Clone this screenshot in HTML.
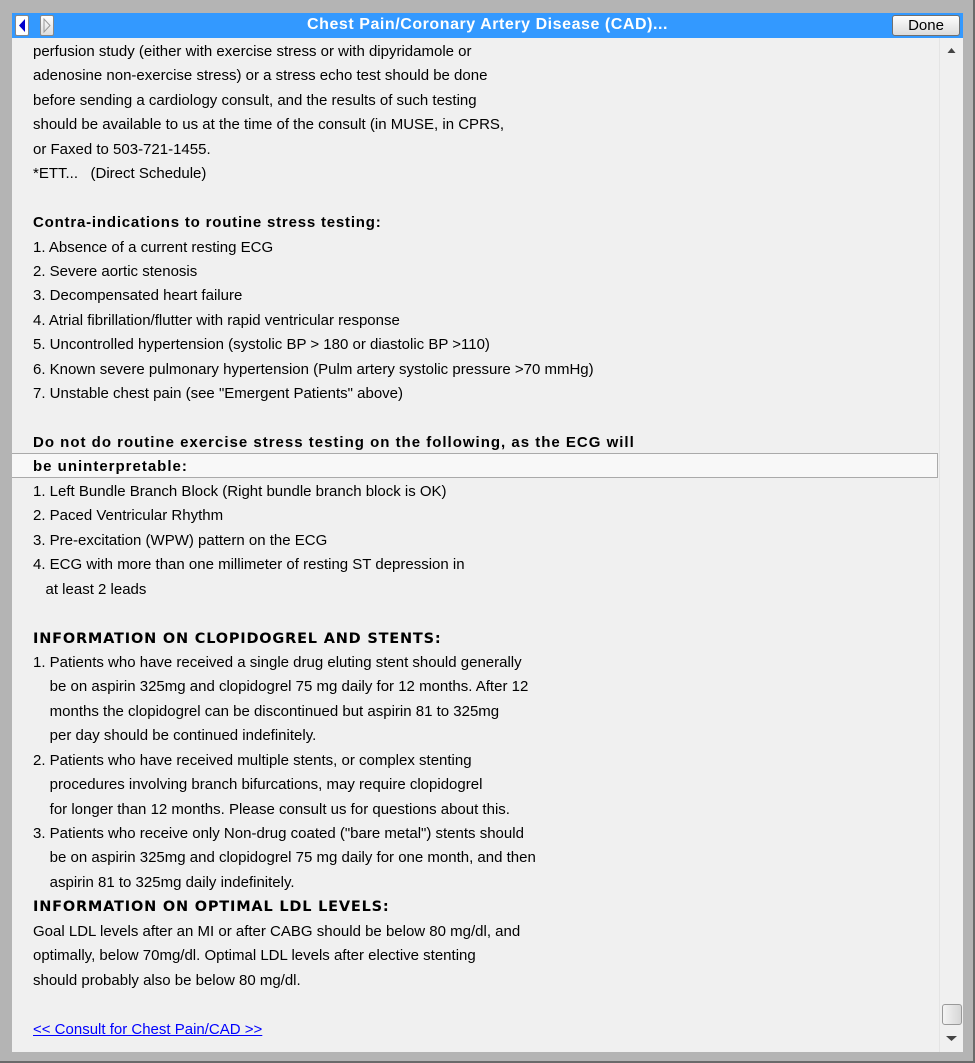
<!DOCTYPE html>
<html><head><style>
html,body{margin:0;padding:0;}
body{width:975px;height:1063px;background:#b4b4b4;position:relative;overflow:hidden;font-family:"Liberation Sans",sans-serif;}
#frame{position:absolute;left:0;top:0;width:973px;height:1061px;border-right:2px solid #6a6a6a;border-bottom:2px solid #6a6a6a;}
#title{position:absolute;left:12px;top:13px;width:951px;height:25px;background:#3399ff;}
#title .t{position:absolute;left:0;right:0;top:3px;text-align:center;color:#fff;font-weight:bold;font-size:16px;letter-spacing:0.55px;}
.nb{position:absolute;top:2px;width:12px;height:19px;background:linear-gradient(#fff,#ddd);border:1px solid #888;border-radius:2px;}
#done{position:absolute;right:3px;top:2px;width:66px;height:19px;background:linear-gradient(#fdfdfd,#dcdcdc);border:1px solid #707070;border-radius:3px;font-size:15px;text-align:center;line-height:19px;color:#000;}
#content{position:absolute;left:12px;top:38px;width:951px;height:1014px;background:#f0f0f0;}
#sb{position:absolute;right:0;top:0;width:23px;height:100%;background:#f0f0f0;border-left:1px solid #e4e4e4;}
#thumb{position:absolute;left:2px;top:966px;width:18px;height:19px;border:1px solid #999;border-radius:3px;background:linear-gradient(90deg,#f4f4f4,#d6d6d6);}
#text{position:absolute;left:21px;top:2px;font-size:15px;line-height:24.44px;color:#000;letter-spacing:0;white-space:pre;}
.b{font-weight:bold;letter-spacing:1px;}
.b2{font-weight:bold;letter-spacing:0.8px;}
.h{font-family:"DejaVu Sans",sans-serif;font-weight:bold;font-size:14.5px;letter-spacing:0.8px;}
#hl{position:absolute;left:0;top:415px;width:925px;height:23px;background:#f8f8f8;border:1px solid #aaa;border-left:none;}
a{color:#0000ff;text-decoration:underline;letter-spacing:0;}
</style></head><body>
<div id="frame"></div>
<div id="title">
<div class="nb" style="left:3px;background:#fff"><svg width="12" height="19"><polygon points="9,3 9,16 3,9.5" fill="#0000cc"/></svg></div>
<div class="nb" style="left:28px"><svg width="12" height="19"><polygon points="3,3 3,16 9,9.5" fill="none" stroke="#999"/></svg></div>
<div class="t">Chest Pain/Coronary Artery Disease (CAD)...</div>
<div id="done">Done</div>
</div>
<div id="content">
<div id="hl"></div>
<div id="sb"><svg width="23" height="20" style="position:absolute;top:6px"><polygon points="11.5,4 7.5,9 15.5,9" fill="#444"/></svg><div id="thumb"></div><svg width="23" height="20" style="position:absolute;top:990px"><polygon points="6,8 17,8 11.5,13" fill="#444"/></svg></div>
<div id="text">perfusion study (either with exercise stress or with dipyridamole or
adenosine non-exercise stress) or a stress echo test should be done
before sending a cardiology consult, and the results of such testing
should be available to us at the time of the consult (in MUSE, in CPRS,
or Faxed to 503-721-1455.
*ETT...   (Direct Schedule)

<span class="b2">Contra-indications to routine stress testing:</span>
1. Absence of a current resting ECG
2. Severe aortic stenosis
3. Decompensated heart failure
4. Atrial fibrillation/flutter with rapid ventricular response
5. Uncontrolled hypertension (systolic BP &gt; 180 or diastolic BP &gt;110)
6. Known severe pulmonary hypertension (Pulm artery systolic pressure &gt;70 mmHg)
7. Unstable chest pain (see "Emergent Patients" above)

<span class="b">Do not do routine exercise stress testing on the following, as the ECG will</span>
<span class="b">be uninterpretable:</span>
1. Left Bundle Branch Block (Right bundle branch block is OK)
2. Paced Ventricular Rhythm
3. Pre-excitation (WPW) pattern on the ECG
4. ECG with more than one millimeter of resting ST depression in
   at least 2 leads

<span class="h">INFORMATION ON CLOPIDOGREL AND STENTS:</span>
1. Patients who have received a single drug eluting stent should generally
    be on aspirin 325mg and clopidogrel 75 mg daily for 12 months. After 12
    months the clopidogrel can be discontinued but aspirin 81 to 325mg
    per day should be continued indefinitely.
2. Patients who have received multiple stents, or complex stenting
    procedures involving branch bifurcations, may require clopidogrel
    for longer than 12 months. Please consult us for questions about this.
3. Patients who receive only Non-drug coated ("bare metal") stents should
    be on aspirin 325mg and clopidogrel 75 mg daily for one month, and then
    aspirin 81 to 325mg daily indefinitely.
<span class="h">INFORMATION ON OPTIMAL LDL LEVELS:</span>
Goal LDL levels after an MI or after CABG should be below 80 mg/dl, and
optimally, below 70mg/dl. Optimal LDL levels after elective stenting
should probably also be below 80 mg/dl.

<a>&lt;&lt; Consult for Chest Pain/CAD &gt;&gt;</a></div>
</div>
</body></html>
